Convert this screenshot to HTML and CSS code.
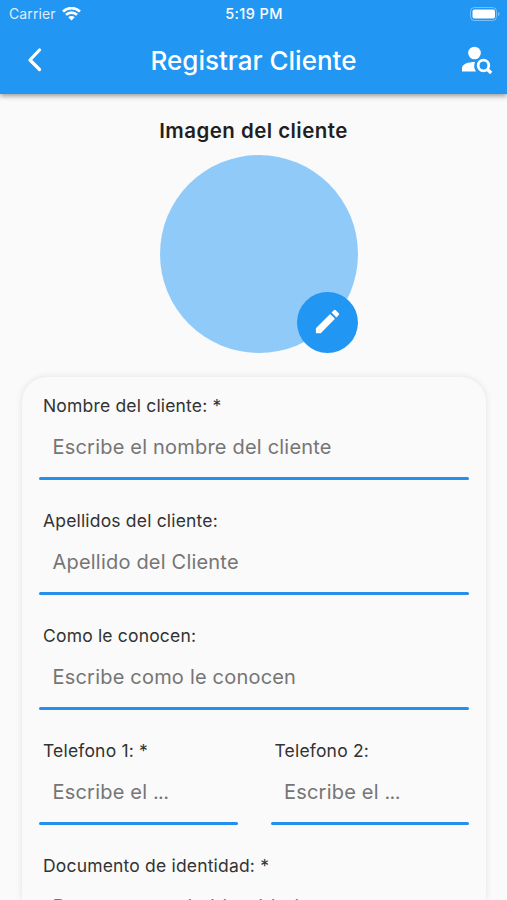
FILE: index.html
```html
<!DOCTYPE html>
<html lang="es">
<head>
<meta charset="utf-8">
<title>Registrar Cliente</title>
<link rel="stylesheet" href="styles.css">
</head>
<body>
<header class="top">
  <div class="status">
    <div class="carrier"><span class="carrier-name">Carrier</span>
      <svg width="19" height="14" viewBox="0 0 19 14" fill="none" stroke="#fff" stroke-width="2.6"><path d="M1 4.500a12.300 12.300 0 0 1 17 0M4 7.800a8 8 0 0 1 11 0"/><path d="M9.500 13.500L6.300 10.300a4.600 4.600 0 0 1 6.400 0z" fill="#fff" stroke="none"/></svg>
    </div>
    <span class="time">5:19 PM</span>
    <svg class="battery" width="31" height="14" viewBox="0 0 31 14"><rect x=".5" y=".5" width="26" height="13" rx="4" fill="none" stroke="#fff" stroke-opacity=".4"/><rect x="2.500" y="2.500" width="22.500" height="9" rx="2" fill="#fff"/><path d="M28 5v4q1.600-.5 1.600-2t-1.600-2z" fill="#fff" fill-opacity=".4"/></svg>
  </div>
  <div class="bar">
    <svg class="back" width="16" height="26" viewBox="0 0 16 26" fill="none" stroke="#fff" stroke-width="3.200" stroke-linecap="round" stroke-linejoin="round"><path d="M13.500 3L4 13l9.500 9.500"/></svg>
    <h1 class="title">Registrar Cliente</h1>
    <svg class="search" width="32" height="30" viewBox="0 0 32 30"><circle cx="13.500" cy="8" r="6.300" fill="#fff"/><path d="M1 26.500v-3.300C1 19 7 17 14 17a10 10 0 0 0 1 9.500z" fill="#fff"/><circle cx="22.500" cy="20.500" r="5.300" fill="none" stroke="#fff" stroke-width="2.800"/><path d="M26 24l4.200 4" stroke="#fff" stroke-width="3.200"/></svg>
  </div>
</header>
<main>
  <h2 class="heading">Imagen del cliente</h2>
  <div class="avatar">
    <div class="edit"><svg width="31" height="31" viewBox="0 0 24 24" fill="#fff"><path d="M3 17.250V21h3.750L17.810 9.940l-3.750-3.750zM20.710 7.040a1 1 0 0 0 0-1.410l-2.340-2.340a1 1 0 0 0-1.410 0l-1.830 1.830 3.750 3.750z"/></svg></div>
  </div>
  <form class="card">
    <div class="field"><div class="label">Nombre del cliente: *</div><div class="input">Escribe el nombre del cliente</div></div>
    <div class="field"><div class="label">Apellidos del cliente:</div><div class="input">Apellido del Cliente</div></div>
    <div class="field"><div class="label">Como le conocen:</div><div class="input">Escribe como le conocen</div></div>
    <div class="row">
      <div class="field"><div class="label">Telefono 1: *</div><div class="input">Escribe el <span class="dots">...</span></div></div>
      <div class="field"><div class="label">Telefono 2:</div><div class="input">Escribe el <span class="dots">...</span></div></div>
    </div>
    <div class="field"><div class="label">Documento de identidad: *</div><div class="input">Documentos de identidad</div></div>
  </form>
</main>
</body>
</html>
```
FILE: styles.css
```css
* { box-sizing: border-box; }
body { margin: 0; height: 900px; overflow: hidden; background: #fafafa; font-family: Inter, sans-serif; color: #1f1f1f; }
.top { position: relative; height: 94px; background: #2196f3; color: #fff; box-shadow: 0 2px 5px rgba(0,0,0,.4); }
.status { display: grid; grid-template-columns: 1fr auto 1fr; align-items: center; height: 27px; padding: 0 6px 0 7px; font-size: 14px; }
.carrier { display: flex; align-items: center; gap: 6px; margin-left: 2px; }
.carrier-name { letter-spacing: .1px; opacity: .85; }
.time { font-weight: 500; font-size: 14.500px; letter-spacing: .4px; }
.battery { justify-self: end; }
.bar { display: grid; grid-template-columns: 40px 1fr 40px; align-items: center; height: 66px; padding: 0 14px 0 26px; }
.back { margin-top: -1px; }
.title { margin: 0 12px 0 0; text-align: center; font-size: 26px; font-weight: 500; }
.search { justify-self: end; }
.heading { margin: 24px 0 11px; line-height: 26px; text-align: center; font-size: 20.500px; font-weight: 600; letter-spacing: .45px; }
.avatar { position: relative; width: 198px; height: 198px; margin: 0 0 0 160px; border-radius: 50%; background: #90caf9; }
.edit { position: absolute; right: 0; bottom: 0; width: 61px; height: 61px; border-radius: 50%; background: #2196f3; display: grid; place-items: center; }
.edit svg { margin-top: -2px; }
.card { margin: 24px 21px 0 22px; height: 523px; padding: 16px 17px 0; border-radius: 25px 25px 0 0; background: #fafafa; box-shadow: 0 0 7px rgba(0,0,0,.1); }
.field { height: 115px; min-width: 0; }
.label { padding-left: 4px; line-height: 26px; font-size: 17.500px; letter-spacing: .18px; color: #333; }
.input { height: 61px; padding: 0 14px 0 13.500px; line-height: 57px; font-size: 20px; letter-spacing: .2px; color: #757575; white-space: nowrap; position: relative; }
.input::after { content: ""; position: absolute; left: 0; right: 0; bottom: 0; height: 3px; border-radius: 2px; background: #2590eb; }
.dots { letter-spacing: -.7px; }
.row { display: grid; grid-template-columns: 1fr 1fr; gap: 33px; }
```
